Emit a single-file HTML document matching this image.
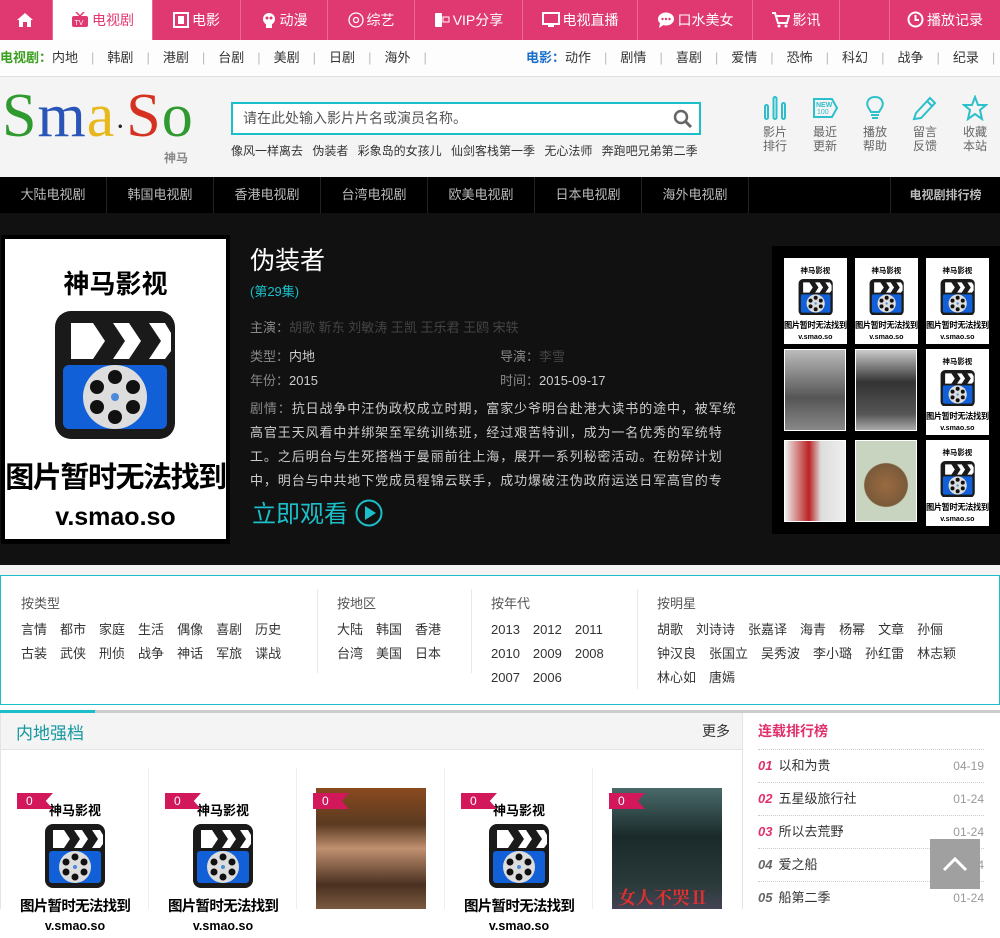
<!DOCTYPE html>
<html><head><meta charset="utf-8">
<style>
*{margin:0;padding:0;box-sizing:border-box}
body{width:1000px;height:909px;overflow:hidden;background:#fff;font-family:"Liberation Sans","Noto Sans CJK SC",sans-serif;font-size:13px;color:#333;position:relative}
.abs{position:absolute}
.nav{left:0;top:0;width:1000px;height:40px;background:#e03870}
.nav div{position:absolute;top:0;height:40px;line-height:40px;color:#fff;font-size:14px;text-align:center;border-right:1px solid #ea6a93}
.nav svg{vertical-align:-3px;margin-right:3px}
.sub{top:40px;left:0;width:1000px;height:37px;background:#fdfdfd;border-bottom:1px solid #e0e0e0;line-height:36px;font-size:13px;color:#333}
.sub span.s{color:#bbb;margin:0 13px}
.hdr{top:77px;left:0;width:1000px;height:100px;background:#f4f4f4}
.cat{top:177px;left:0;width:1000px;height:36px;background:#000}
.cat div{position:absolute;top:0;height:36px;line-height:36px;color:#bbb;font-size:13px;text-align:center;border-right:1px solid #222}
.det{top:213px;left:0;width:1000px;height:352px;background:#111}
.ph{position:absolute;background:#fff;overflow:hidden;text-align:center;color:#000;font-weight:bold;width:22em;height:30em}
.ph .t1{position:absolute;left:0;right:0;top:1.15em;font-size:2.6em;line-height:1.2em;white-space:nowrap}
.ph svg{position:absolute;left:4.8em;top:7.2em;width:12.4em;height:12.8em}
.ph .t2{position:absolute;left:0;right:0;top:7.65em;font-size:2.9em;line-height:1.2em;letter-spacing:-0.05em;white-space:nowrap}
.ph .t3{position:absolute;left:0;right:0;top:10.5em;font-size:2.5em;line-height:1.2em;white-space:nowrap}
.filt{top:575px;left:0;width:1000px;height:130px;border:1px solid #1bbfc9;background:#fff}
.filt .c{position:absolute;top:16px;font-size:13px;color:#333;line-height:24px;white-space:nowrap}
.filt .c b{font-weight:normal;color:#555;display:block;margin-bottom:2px}
.filt .c span{margin-right:13px}
.vl{position:absolute;top:12px;width:1px;background:#e8e8e8}
.ic{position:absolute;top:95px;width:40px;text-align:center;font-size:12px;color:#666;line-height:14px}
.ic svg{display:block;margin:0 auto 4px}
.rk{position:absolute;left:758px;width:226px;height:33px;border-top:1px dotted #ccc;line-height:32px;font-size:13px;color:#333}
.rk i{font-weight:bold;color:#e0306b;margin-right:6px}
.rk em{font-style:normal;float:right;color:#999;font-size:12px}
.flag{position:absolute;width:36px;height:16px;background:#d2185a;color:#fff;font-size:12px;line-height:16px;padding-left:9px;clip-path:polygon(0 0,100% 0,80% 50%,100% 100%,0 100%)}
</style></head><body>
<svg width="0" height="0" style="position:absolute"><defs>
<symbol id="clap" viewBox="0 0 124 128">
<rect x="2" y="0" width="120" height="128" rx="16" fill="#1a1a1a"/>
<path d="M18 12 L40 12 L52 30 L40 48 L18 48 Z M60 12 L76 12 L88 30 L76 48 L60 48 L72 30Z M96 12 L112 12 L118 22 L118 40 L112 48 L96 48 L108 30Z" fill="#fff"/>
<rect x="10" y="54" width="104" height="64" rx="6" fill="#1160d8"/>
<circle cx="62" cy="86" r="32" fill="#ddd"/>
<g fill="#111"><circle cx="62" cy="66" r="7"/><circle cx="62" cy="106" r="7"/><circle cx="44" cy="76" r="7"/><circle cx="80" cy="76" r="7"/><circle cx="44" cy="96" r="7"/><circle cx="80" cy="96" r="7"/></g>
<circle cx="62" cy="86" r="4" fill="#4a8ad8"/>
</symbol></defs></svg>

<div class="abs nav">
<div style="left:0;width:53px"><svg width="18" height="16" viewBox="0 0 18 16"><path d="M9 1 L1 8 H3 V15 H7 V10 H11 V15 H15 V8 H17Z" fill="#fff"/></svg></div>
<div style="left:53px;width:100px;background:#fff;color:#e03870"><svg width="18" height="16" viewBox="0 0 18 16"><rect x="1" y="4" width="16" height="11" rx="2" fill="#e03870"/><path d="M5 0 L9 4 L13 0" stroke="#e03870" fill="none" stroke-width="1.5"/><text x="3.5" y="13" font-size="7" fill="#fff" font-family="Liberation Sans">TV</text></svg>电视剧</div>
<div style="left:153px;width:88px"><svg width="16" height="16"><rect x="1" y="1" width="14" height="14" fill="none" stroke="#fff" stroke-width="2"/><rect x="5" y="4" width="6" height="8" fill="#fff"/></svg>电影</div>
<div style="left:241px;width:87px"><svg width="16" height="16"><circle cx="8" cy="7" r="6" fill="#fff"/><circle cx="6" cy="6" r="1.5" fill="#e03870"/><circle cx="10" cy="6" r="1.5" fill="#e03870"/><rect x="5" y="12" width="6" height="4" fill="#fff"/></svg>动漫</div>
<div style="left:328px;width:87px"><svg width="16" height="16"><circle cx="8" cy="8" r="7" fill="none" stroke="#fff" stroke-width="1.3"/><circle cx="8" cy="8" r="2.5" fill="none" stroke="#fff" stroke-width="1.3"/></svg>综艺</div>
<div style="left:415px;width:108px"><svg width="16" height="16"><rect x="1" y="1" width="7" height="14" rx="1" fill="#fff"/><rect x="9" y="5" width="6" height="5" fill="none" stroke="#fff"/></svg>VIP分享</div>
<div style="left:523px;width:115px"><svg width="18" height="16"><rect x="1" y="1" width="16" height="11" fill="none" stroke="#fff" stroke-width="2"/><rect x="6" y="13" width="6" height="2" fill="#fff"/></svg>电视直播</div>
<div style="left:638px;width:115px"><svg width="18" height="16"><ellipse cx="9" cy="7" rx="8" ry="6.5" fill="#fff"/><path d="M3 11 L2 16 L8 12Z" fill="#fff"/><circle cx="5.5" cy="7" r="1.2" fill="#e03870"/><circle cx="9" cy="7" r="1.2" fill="#e03870"/><circle cx="12.5" cy="7" r="1.2" fill="#e03870"/></svg>口水美女</div>
<div style="left:753px;width:87px"><svg width="18" height="16"><path d="M0 1 H3 L6 11 H15 L17 4 H4" fill="none" stroke="#fff" stroke-width="2"/><circle cx="7" cy="14" r="1.5" fill="#fff"/><circle cx="14" cy="14" r="1.5" fill="#fff"/></svg>影讯</div>
<div style="left:840px;width:50px"></div>
<div style="left:890px;width:110px;border:none"><svg width="17" height="17"><circle cx="8.5" cy="8.5" r="7" fill="none" stroke="#fff" stroke-width="2"/><path d="M8.5 4 V9 H12" stroke="#fff" fill="none" stroke-width="2"/></svg>播放记录</div>
</div>

<div class="abs sub">
<span class="abs" style="left:0;top:0;white-space:nowrap"><b style="color:#3aa020">电视剧：</b>内地<span class="s">|</span>韩剧<span class="s">|</span>港剧<span class="s">|</span>台剧<span class="s">|</span>美剧<span class="s">|</span>日剧<span class="s">|</span>海外<span class="s">|</span></span>
<span class="abs" style="left:526px;top:0;white-space:nowrap"><b style="color:#1a6fc9">电影：</b>动作<span class="s">|</span>剧情<span class="s">|</span>喜剧<span class="s">|</span>爱情<span class="s">|</span>恐怖<span class="s">|</span>科幻<span class="s">|</span>战争<span class="s">|</span>纪录<span class="s">|</span></span>
</div>

<div class="abs hdr">
<div class="abs" style="left:2px;top:4px;font-family:'Liberation Serif',serif;font-size:62px;line-height:70px;letter-spacing:1px;white-space:nowrap"><span style="color:#2f9a2f">S</span><span style="color:#2955b8">m</span><span style="color:#e8b81a">a</span><span style="color:#222;font-size:30px">·</span><span style="color:#d63020">S</span><span style="color:#2f9a2f">o</span></div>
<div class="abs" style="left:164px;top:72px;font-size:12px;color:#888;font-weight:bold">神马</div>
<div class="abs" style="left:231px;top:25px;width:470px;height:33px;border:2px solid #1bbfc9;background:#fff;font-size:14px;color:#555;line-height:29px;padding-left:10px">请在此处输入影片片名或演员名称。
<svg class="abs" style="right:6px;top:5px" width="20" height="20"><circle cx="8" cy="8" r="6" fill="none" stroke="#666" stroke-width="2.5"/><path d="M12.5 12.5 L18 18" stroke="#666" stroke-width="3"/></svg></div>
<div class="abs" style="left:231px;top:65px;font-size:12px;color:#333;word-spacing:6px;white-space:nowrap">像风一样离去 伪装者 彩象岛的女孩儿 仙剑客栈第一季 无心法师 奔跑吧兄弟第二季</div>
</div>
<div class="ic" style="left:755px"><svg width="24" height="26"><g fill="none" stroke="#2dbfcb" stroke-width="2"><rect x="2" y="10" width="3" height="14" rx="1.5"/><rect x="10.5" y="2" width="3" height="22" rx="1.5"/><rect x="19" y="8" width="3" height="16" rx="1.5"/></g></svg>影片<br>排行</div>
<div class="ic" style="left:805px"><svg width="26" height="26"><path d="M2 4 H20 L25 13 L20 22 H2Z" fill="none" stroke="#2dbfcb" stroke-width="2"/><text x="4" y="12" font-size="7" fill="#2dbfcb" font-family="Liberation Sans" font-weight="bold">NEW</text><text x="5" y="19" font-size="7" fill="#2dbfcb" font-family="Liberation Sans">100</text></svg>最近<br>更新</div>
<div class="ic" style="left:855px"><svg width="24" height="26"><path d="M12 2 C5 2 3 8 5 12 L8 17 H16 L19 12 C21 8 19 2 12 2Z" fill="none" stroke="#2dbfcb" stroke-width="2"/><path d="M8 20 H16 M9 23 H15" stroke="#2dbfcb" stroke-width="2"/></svg>播放<br>帮助</div>
<div class="ic" style="left:905px"><svg width="26" height="26"><path d="M4 18 L18 3 L23 8 L9 23 L2 24Z M15 6 L20 11" fill="none" stroke="#2dbfcb" stroke-width="2"/></svg>留言<br>反馈</div>
<div class="ic" style="left:955px"><svg width="26" height="26"><path d="M13 2 L16 10 H24 L18 15 L20 24 L13 19 L6 24 L8 15 L2 10 H10Z" fill="none" stroke="#2dbfcb" stroke-width="2"/></svg>收藏<br>本站</div>

<div class="abs cat">
<div style="left:0;width:107px">大陆电视剧</div><div style="left:107px;width:107px">韩国电视剧</div><div style="left:214px;width:107px">香港电视剧</div><div style="left:321px;width:107px">台湾电视剧</div><div style="left:428px;width:107px">欧美电视剧</div><div style="left:535px;width:107px">日本电视剧</div><div style="left:642px;width:107px">海外电视剧</div>
<div style="left:890px;width:110px;border-left:1px solid #222;border-right:none;font-weight:bold;font-size:12px">电视剧排行榜</div>
</div>

<div class="abs det">
<div class="abs" style="left:1px;top:22px;width:229px;height:309px;background:#000"></div>
<div class="ph" style="left:5px;top:26px;font-size:10px;width:221px;height:300px"><div class="t1">神马影视</div><svg><use href="#clap"/></svg><div class="t2">图片暂时无法找到</div><div class="t3">v.smao.so</div></div>
<div class="abs" style="left:250px;top:28px;font-size:25px;color:#fff">伪装者</div>
<div class="abs" style="left:250px;top:68px;font-size:13px;color:#1bbfc9">(第29集)</div>
<div class="abs" style="left:250px;top:104px;font-size:13px;color:#888">主演：<span style="color:#444">胡歌 靳东 刘敏涛 王凯 王乐君 王鸥 宋轶</span></div>
<div class="abs" style="left:250px;top:133px;font-size:13px;color:#888">类型：<span style="color:#ccc">内地</span></div>
<div class="abs" style="left:500px;top:133px;font-size:13px;color:#888">导演：<span style="color:#444">李雪</span></div>
<div class="abs" style="left:250px;top:157px;font-size:13px;color:#888">年份：<span style="color:#ccc">2015</span></div>
<div class="abs" style="left:500px;top:157px;font-size:13px;color:#888">时间：<span style="color:#ccc">2015-09-17</span></div>
<div class="abs" style="left:250px;top:184px;width:500px;font-size:13px;letter-spacing:0.9px;line-height:24px;color:#ccc;height:96px;overflow:hidden"><span style="color:#888">剧情：</span>抗日战争中汪伪政权成立时期，富家少爷明台赴港大读书的途中，被军统高官王天风看中并绑架至军统训练班，经过艰苦特训，成为一名优秀的军统特工。之后明台与生死搭档于曼丽前往上海，展开一系列秘密活动。在粉碎计划中，明台与中共地下党成员程锦云联手，成功爆破汪伪政府运送日军高官的专</div>
<div class="abs" style="left:252px;top:286px;font-size:24px;color:#1bbfc9;line-height:32px">立即观看 <svg style="vertical-align:-5px" width="28" height="28"><circle cx="14" cy="14" r="12.5" fill="none" stroke="#1bbfc9" stroke-width="2"/><path d="M10 7 L21 14 L10 21Z" fill="#1bbfc9"/></svg></div>
<div class="abs" style="left:772px;top:33px;width:228px;height:288px;background:#000"></div>
<div class="ph" style="left:784px;top:45px;font-size:2.85px"><div class="t1">神马影视</div><svg><use href="#clap"/></svg><div class="t2">图片暂时无法找到</div><div class="t3">v.smao.so</div></div>
<div class="ph" style="left:855px;top:45px;font-size:2.85px"><div class="t1">神马影视</div><svg><use href="#clap"/></svg><div class="t2">图片暂时无法找到</div><div class="t3">v.smao.so</div></div>
<div class="ph" style="left:926px;top:45px;font-size:2.85px"><div class="t1">神马影视</div><svg><use href="#clap"/></svg><div class="t2">图片暂时无法找到</div><div class="t3">v.smao.so</div></div>
<div class="abs" style="left:784px;top:136px;width:62px;height:82px;background:linear-gradient(#bbb,#555 60%,#888);border:1px solid #fff"></div>
<div class="abs" style="left:855px;top:136px;width:62px;height:82px;background:linear-gradient(#ccc,#333 40%,#555 80%,#aaa);border:1px solid #fff"></div>
<div class="ph" style="left:926px;top:136px;font-size:2.85px"><div class="t1">神马影视</div><svg><use href="#clap"/></svg><div class="t2">图片暂时无法找到</div><div class="t3">v.smao.so</div></div>
<div class="abs" style="left:784px;top:227px;width:62px;height:82px;background:linear-gradient(90deg,#eee,#b22 40%,#ddd 60%,#eee);border:1px solid #fff"></div>
<div class="abs" style="left:855px;top:227px;width:62px;height:82px;background:radial-gradient(circle at 50% 55%,#9a6a40 0,#7a5a3a 40%,#c8d4c0 42%);border:1px solid #fff"></div>
<div class="ph" style="left:926px;top:227px;font-size:2.85px"><div class="t1">神马影视</div><svg><use href="#clap"/></svg><div class="t2">图片暂时无法找到</div><div class="t3">v.smao.so</div></div>
</div>

<div class="abs" style="top:565px;left:0;width:1000px;height:10px;background:#f4f4f4"></div>
<div class="abs filt">
<div class="c" style="left:20px"><b>按类型</b><span>言情</span><span>都市</span><span>家庭</span><span>生活</span><span>偶像</span><span>喜剧</span><span>历史</span><br><span>古装</span><span>武侠</span><span>刑侦</span><span>战争</span><span>神话</span><span>军旅</span><span>谍战</span></div>
<div class="vl" style="left:316px;height:84px;top:13px"></div>
<div class="c" style="left:336px"><b>按地区</b><span>大陆</span><span>韩国</span><span>香港</span><br><span>台湾</span><span>美国</span><span>日本</span></div>
<div class="vl" style="left:470px;height:84px;top:13px"></div>
<div class="c" style="left:490px"><b>按年代</b><span>2013</span><span>2012</span><span>2011</span><br><span>2010</span><span>2009</span><span>2008</span><br><span>2007</span><span>2006</span></div>
<div class="vl" style="left:636px;height:100px;top:13px"></div>
<div class="c" style="left:656px"><b>按明星</b><span>胡歌</span><span>刘诗诗</span><span>张嘉译</span><span>海青</span><span>杨幂</span><span>文章</span><span>孙俪</span><br><span>钟汉良</span><span>张国立</span><span>吴秀波</span><span>李小璐</span><span>孙红雷</span><span>林志颖</span><br><span>林心如</span><span>唐嫣</span></div>
</div>

<div class="abs" style="top:705px;left:0;width:1000px;height:5px;background:#fff"></div>
<div class="abs" style="top:710px;left:0;width:1000px;height:3px;background:#ccc"></div>
<div class="abs" style="top:710px;left:0;width:95px;height:3px;background:#1bbfc9"></div>
<div class="abs" style="top:713px;left:0;width:742px;height:37px;background:#f4f4f4;border-bottom:1px solid #e4e4e4;border-left:1px solid #e4e4e4"></div>
<div class="abs" style="top:719px;left:16px;font-size:17px;color:#14979f">内地强档</div>
<div class="abs" style="top:721px;left:702px;font-size:14px;color:#333">更多</div>
<div class="abs" style="top:750px;left:0;width:1px;height:159px;background:#e4e4e4"></div>
<div class="abs" style="top:768px;left:148px;width:1px;height:141px;background:#eee"></div>
<div class="abs" style="top:768px;left:296px;width:1px;height:141px;background:#eee"></div>
<div class="abs" style="top:768px;left:444px;width:1px;height:141px;background:#eee"></div>
<div class="abs" style="top:768px;left:592px;width:1px;height:141px;background:#eee"></div>
<div class="ph" style="left:20px;top:788px;font-size:5px"><div class="t1">神马影视</div><svg><use href="#clap"/></svg><div class="t2">图片暂时无法找到</div><div class="t3">v.smao.so</div></div>
<div class="ph" style="left:168px;top:788px;font-size:5px"><div class="t1">神马影视</div><svg><use href="#clap"/></svg><div class="t2">图片暂时无法找到</div><div class="t3">v.smao.so</div></div>
<div class="abs" style="left:316px;top:788px;width:110px;height:121px;background:linear-gradient(#8a4a20,#5a3a20 30%,#c09070 50%,#4a3020 80%,#7a5a40)"></div>
<div class="ph" style="left:464px;top:788px;font-size:5px"><div class="t1">神马影视</div><svg><use href="#clap"/></svg><div class="t2">图片暂时无法找到</div><div class="t3">v.smao.so</div></div>
<div class="abs" style="left:612px;top:788px;width:110px;height:121px;background:linear-gradient(#4a6a6a,#1a2a2a 40%,#2a3a3a 80%,#445)"><div class="abs" style="left:6px;top:96px;color:#e03030;font-size:18px;font-weight:bold;font-family:'Liberation Serif','Noto Serif CJK SC',serif;white-space:nowrap">女人不哭Ⅱ</div></div>
<div class="flag" style="left:17px;top:793px">0</div>
<div class="flag" style="left:165px;top:793px">0</div>
<div class="flag" style="left:313px;top:793px">0</div>
<div class="flag" style="left:461px;top:793px">0</div>
<div class="flag" style="left:609px;top:793px">0</div>

<div class="abs" style="top:713px;left:742px;width:258px;height:196px;background:#fff;border-left:1px solid #e4e4e4"></div>
<div class="abs" style="top:721px;left:758px;font-size:14px;font-weight:bold;color:#e0306b">连载排行榜</div>
<div class="rk" style="top:749px"><i>01</i>以和为贵<em>04-19</em></div>
<div class="rk" style="top:782px"><i>02</i>五星级旅行社<em>01-24</em></div>
<div class="rk" style="top:815px"><i>03</i>所以去荒野<em>01-24</em></div>
<div class="rk" style="top:848px"><i style="color:#666">04</i>爱之船<em>01-24</em></div>
<div class="rk" style="top:881px;height:28px;overflow:hidden"><i style="color:#666">05</i>船第二季<em>01-24</em></div>
<div class="abs" style="left:930px;top:839px;width:50px;height:50px;background:#a0a0a0"><svg width="50" height="50"><path d="M14 31 L25 20 L36 31" fill="none" stroke="#fff" stroke-width="3"/></svg></div>
</body></html>
